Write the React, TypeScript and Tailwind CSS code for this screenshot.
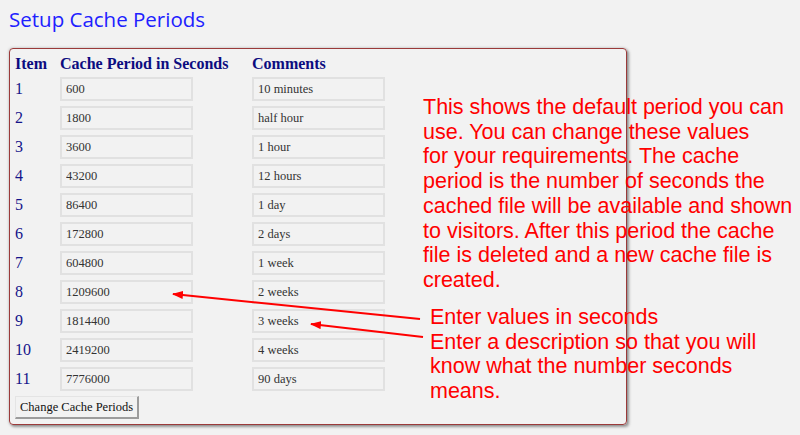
import React from "react";

type Period = { seconds: string; comment: string };

const periods: Period[] = [
  { seconds: "600", comment: "10 minutes" },
  { seconds: "1800", comment: "half hour" },
  { seconds: "3600", comment: "1 hour" },
  { seconds: "43200", comment: "12 hours" },
  { seconds: "86400", comment: "1 day" },
  { seconds: "172800", comment: "2 days" },
  { seconds: "604800", comment: "1 week" },
  { seconds: "1209600", comment: "2 weeks" },
  { seconds: "1814400", comment: "3 weeks" },
  { seconds: "2419200", comment: "4 weeks" },
  { seconds: "7776000", comment: "90 days" },
];

function Field({ value }: { value: string }) {
  return (
    <input
      readOnly
      value={value}
      className="h-[24px] w-[133px] border-2 border-[#e1e1e1] bg-[#f2f2f2] pl-[4px] font-['Liberation_Serif',serif] text-[12.5px] text-[#333] outline-none"
    />
  );
}

export default function App() {
  return (
    <div className="relative min-h-screen bg-[#f2f2f2]">
      <h1 className="pl-[9px] pt-[6px] font-['Open_Sans',sans-serif] text-[20.5px] leading-[27px] text-[#2020ff]">
        Setup Cache Periods
      </h1>

      <div className="ml-[9px] mt-[15px] w-[618px] rounded-[4px] border border-[#9b3a3a] pb-[5px] pl-[5px] pt-[5px] shadow-[2px_2px_3px_rgba(0,0,0,0.35),0_0_3px_rgba(0,0,0,0.25)]">
        <div className="grid grid-cols-[45px_192px_133px] font-['Liberation_Serif',serif] text-[16px] leading-[20px] font-bold text-[#0c0c80]">
          <div>Item</div>
          <div>Cache Period in Seconds</div>
          <div>Comments</div>
        </div>
        {periods.map((p, i) => (
          <div
            key={p.seconds}
            className="grid h-[29px] grid-cols-[45px_192px_133px] items-center font-['Liberation_Serif',serif] text-[16px] text-[#14148a]"
          >
            <div>{i + 1}</div>
            <div>
              <Field value={p.seconds} />
            </div>
            <div>
              <Field value={p.comment} />
            </div>
          </div>
        ))}
        <button className="mt-[1px] h-[23px] border-l border-t border-b-2 border-r-2 border-l-[#e4e4e4] border-t-[#e4e4e4] border-b-[#9c9c9c] border-r-[#9c9c9c] bg-[#f2f2f2] px-[4px] font-['Liberation_Serif',serif] text-[12.5px] leading-[18px] text-[#111]">
          Change Cache Periods
        </button>
      </div>

      {/* Annotation notes laid over the form */}
      <div className="absolute left-[423px] top-[95px] font-['Liberation_Sans',Arial,sans-serif] text-[21.5px] leading-[24.7px] whitespace-nowrap text-[#ff0000]">
        This shows the default period you can
        <br />
        use. You can change these values
        <br />
        for your requirements. The cache
        <br />
        period is the number of seconds the
        <br />
        cached file will be available and shown
        <br />
        to visitors. After this period the cache
        <br />
        file is deleted and a new cache file is
        <br />
        created.
      </div>
      <div className="absolute left-[430px] top-[305px] font-['Liberation_Sans',Arial,sans-serif] text-[21.5px] leading-[24.5px] whitespace-nowrap text-[#ff0000]">
        Enter values in seconds
        <br />
        Enter a description so that you will
        <br />
        know what the number seconds
        <br />
        means.
      </div>

      {/* Pointer arrows from the notes to the fields */}
      <svg className="pointer-events-none absolute left-0 top-0" width="800" height="435">
        <defs>
          <marker id="head" markerWidth="11" markerHeight="8" refX="10" refY="4" orient="auto" markerUnits="userSpaceOnUse">
            <path d="M0,0 L11,4 L0,8 Z" fill="#ff0000" />
          </marker>
        </defs>
        <line x1="420" y1="319" x2="173" y2="294" stroke="#ff0000" strokeWidth="2" markerEnd="url(#head)" />
        <line x1="423" y1="337" x2="311" y2="324" stroke="#ff0000" strokeWidth="2" markerEnd="url(#head)" />
      </svg>
    </div>
  );
}
